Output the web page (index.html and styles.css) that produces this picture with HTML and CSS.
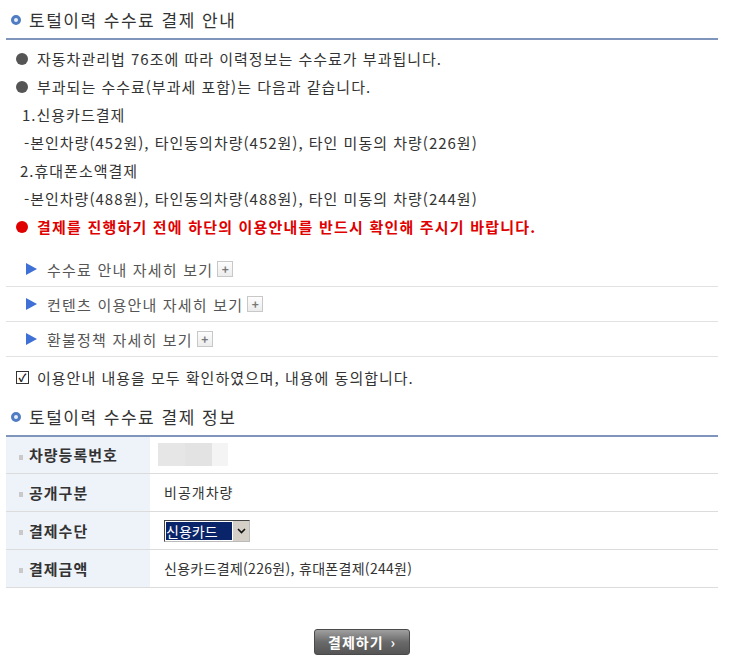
FILE: index.html
```html
<!DOCTYPE html>
<html lang="ko">
<head>
<meta charset="utf-8">
<title>토털이력 수수료 결제</title>
<link rel="stylesheet" href="styles.css">
</head>
<body>
<div class="page">
  <h2 class="sec-title"><span class="ring"></span>토털이력 수수료 결제 안내</h2>
  <ul class="notice">
    <li class="dot">자동차관리법 76조에 따라 이력정보는 수수료가 부과됩니다.</li>
    <li class="dot">부과되는 수수료(부과세 포함)는 다음과 같습니다.</li>
    <li class="num">1.신용카드결제</li>
    <li class="sub">-본인차량(452원), 타인동의차량(452원), 타인 미동의 차량(226원)</li>
    <li class="num num2">2.휴대폰소액결제</li>
    <li class="sub">-본인차량(488원), 타인동의차량(488원), 타인 미동의 차량(244원)</li>
    <li class="dot red">결제를 진행하기 전에 하단의 이용안내를 반드시 확인해 주시기 바랍니다.</li>
  </ul>
  <ul class="links">
    <li><span class="tri"></span>수수료 안내 자세히 보기<span class="plus">+</span></li>
    <li><span class="tri"></span>컨텐츠 이용안내 자세히 보기<span class="plus">+</span></li>
    <li><span class="tri"></span>환불정책 자세히 보기<span class="plus">+</span></li>
  </ul>
  <div class="agree"><span class="chk">✓</span>이용안내 내용을 모두 확인하였으며, 내용에 동의합니다.</div>
  <h2 class="sec-title"><span class="ring"></span>토털이력 수수료 결제 정보</h2>
  <table class="info">
    <tr class="first">
      <th><span class="sq"></span>차량등록번호</th>
      <td><span class="mask"><span class="m1"></span><span class="m2"></span><span class="m3"></span></span></td>
    </tr>
    <tr>
      <th><span class="sq"></span>공개구분</th>
      <td>비공개차량</td>
    </tr>
    <tr>
      <th><span class="sq"></span>결제수단</th>
      <td><span class="select"><span class="sel-val">신용카드</span><span class="sel-arrow"><svg width="9" height="6" viewBox="0 0 9 6"><path d="M1 1 L4.5 4.5 L8 1" fill="none" stroke="#111" stroke-width="1.6"/></svg></span></span></td>
    </tr>
    <tr>
      <th><span class="sq"></span>결제금액</th>
      <td class="amount">신용카드결제(226원), 휴대폰결제(244원)</td>
    </tr>
  </table>
  <div class="actions"><button class="pay" type="button">결제하기 <span class="arr">›</span></button></div>
</div>
</body>
</html>
```

FILE: styles.css
```css
body {
  margin: 0;
  background: #fff;
  font-family: "Noto Sans CJK KR", "Noto Sans", sans-serif;
  color: #333;
}
.page {
  width: 712px;
  margin-left: 6px;
}
.sec-title {
  margin: 0;
  height: 38px;
  display: flex;
  align-items: center;
  font-size: 17px;
  font-weight: normal;
  letter-spacing: 1.5px;
  color: #333;
  border-bottom: 2px solid #7f95bc;
  box-sizing: content-box;
}
.ring {
  width: 4px;
  height: 4px;
  border: 3px solid #4f7cc2;
  border-radius: 50%;
  background: #e8eef8;
  margin: 1px 8px 0 5px;
  flex: none;
}
.notice {
  list-style: none;
  margin: 0;
  padding: 5px 0 0;
  font-size: 15px;
  line-height: 28px;
  letter-spacing: 1px;
}
.notice li {
  display: flex;
  align-items: center;
  height: 28px;
  white-space: nowrap;
}
.notice .dot::before {
  content: "";
  width: 12px;
  height: 12px;
  border-radius: 50%;
  background: #555;
  margin: 0 9px 0 10px;
  flex: none;
}
.notice .red {
  color: #e00000;
  font-weight: bold;
  letter-spacing: 1.2px;
}
.notice .red::before {
  background: #e00000;
}
.notice .num {
  padding-left: 16px;
}
.notice .num2 {
  padding-left: 14px;
}
.notice .sub {
  padding-left: 18px;
}
.links {
  list-style: none;
  margin: 11px 0 0;
  padding: 0;
}
.links li {
  height: 34px;
  display: flex;
  align-items: center;
  padding-left: 20px;
  border-bottom: 1px solid #e2e2e2;
  font-size: 15px;
  letter-spacing: 1.2px;
  color: #555;
}
.tri {
  width: 0;
  height: 0;
  border-left: 11px solid #3e70d6;
  border-top: 6px solid transparent;
  border-bottom: 6px solid transparent;
  margin-right: 10px;
}
.plus {
  width: 14px;
  height: 14px;
  margin-left: 4px;
  border: 1px solid #c8c8c8;
  background: linear-gradient(#fdfdfd, #ececec);
  color: #777;
  font-size: 12px;
  line-height: 14px;
  text-align: center;
  font-weight: bold;
  letter-spacing: 0;
}
.agree {
  height: 40px;
  display: flex;
  align-items: center;
  padding-left: 10px;
  font-size: 15px;
  letter-spacing: 1px;
  color: #333;
}
.chk {
  width: 11px;
  height: 11px;
  border: 1px solid #333;
  margin-right: 8px;
  font-size: 11px;
  line-height: 11px;
  text-align: center;
  letter-spacing: 0;
  color: #111;
  font-weight: bold;
}
.info {
  width: 100%;
  border-collapse: collapse;
  font-size: 14px;
  letter-spacing: 1px;
}
.info tr {
  height: 38px;
}
.info tr.first {
  height: 36px;
}
.info th, .info td {
  border-bottom: 1px solid #dcdcdc;
  padding: 0;
  vertical-align: middle;
}
.info th {
  width: 144px;
  background: #eef2f9;
  text-align: left;
  font-size: 15px;
  font-weight: bold;
  color: #333;
  padding-left: 13px;
  box-sizing: border-box;
}
.info td {
  padding-left: 14px;
  color: #333;
}
.sq {
  display: inline-block;
  width: 4px;
  height: 5px;
  background: #c9c9c9;
  margin-right: 6px;
  vertical-align: middle;
}
.mask {
  display: flex;
  height: 23px;
  margin-left: -6px;
}
.m1 { width: 27px; background: #e6e6e6; }
.m2 { width: 27px; background: #e3e3e3; }
.m3 { width: 16px; background: #f4f4f4; }
.select {
  display: inline-flex;
  height: 20px;
  border: 1px solid #444;
  border-right-color: #bbb;
  border-bottom-color: #bbb;
  vertical-align: middle;
  letter-spacing: 0;
}
.sel-val {
  width: 66px;
  background: #0a246a;
  color: #fff;
  font-size: 14px;
  line-height: 18px;
  margin: 1px 0 1px 1px;
}
.sel-arrow {
  width: 16px;
  background: #d4d0c8;
  display: flex;
  align-items: center;
  justify-content: center;
  border-left: 1px solid #fff;
}
.amount {
  font-size: 14px;
  letter-spacing: 0.3px;
}
.actions {
  text-align: center;
  padding-top: 41px;
}
.pay {
  width: 96px;
  height: 26px;
  border: 1px solid #4a4a4a;
  border-radius: 3px;
  background: linear-gradient(#a0a0a0, #6a6a6a 50%, #555);
  color: #fff;
  font-family: "Noto Sans CJK KR", sans-serif;
  font-size: 14px;
  font-weight: bold;
  letter-spacing: 1px;
  padding: 0;
  line-height: 22px;
}
.arr {
  font-size: 14px;
  margin-left: 2px;
}
```
